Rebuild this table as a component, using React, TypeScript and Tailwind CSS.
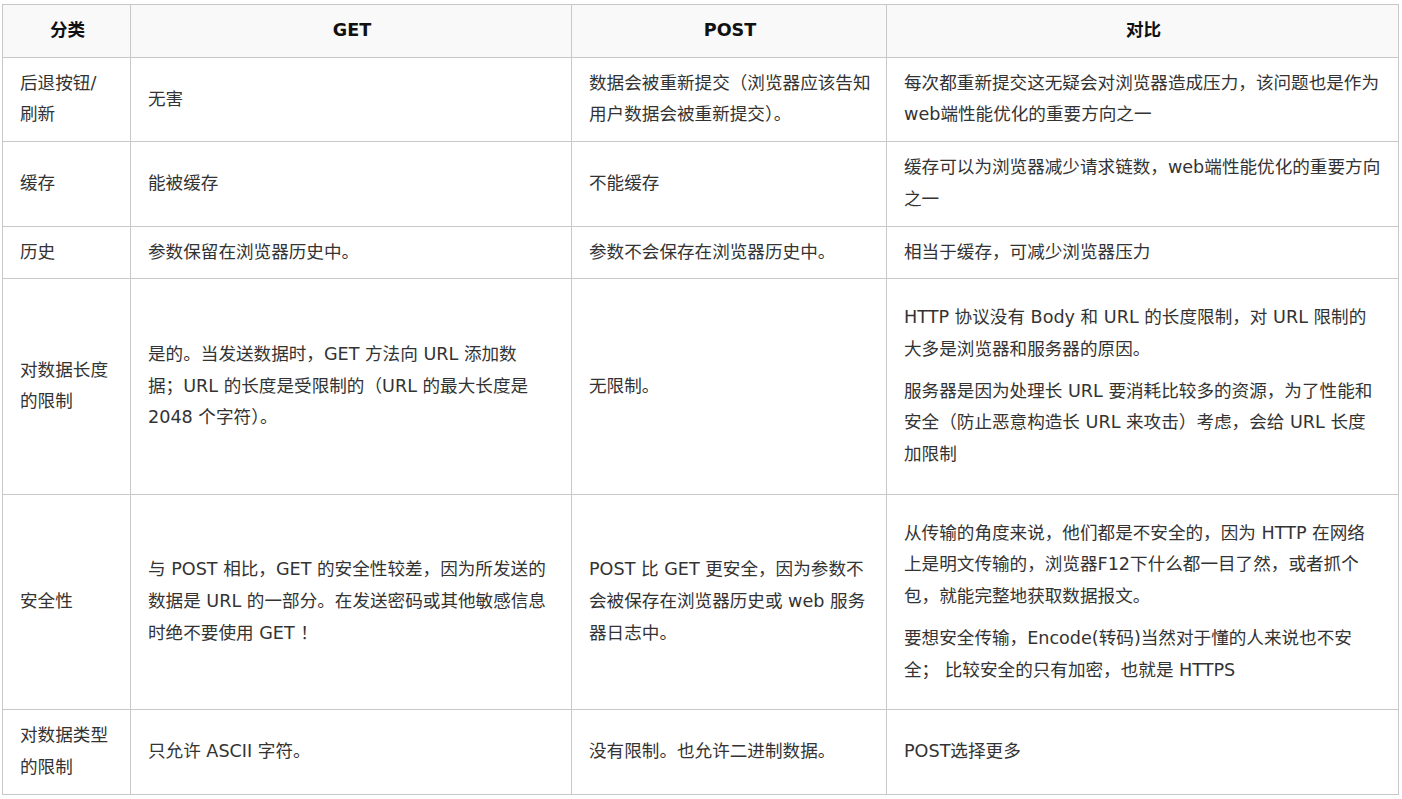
const ROWS: { kind: string; get: string; post: string; compare: string[] }[] = [
  {
    kind: "后退按钮/\n刷新",
    get: "无害",
    post: "数据会被重新提交（浏览器应该告知\n用户数据会被重新提交）。",
    compare: ["每次都重新提交这无疑会对浏览器造成压力，该问题也是作为\nweb端性能优化的重要方向之一"],
  },
  {
    kind: "缓存",
    get: "能被缓存",
    post: "不能缓存",
    compare: ["缓存可以为浏览器减少请求链数，web端性能优化的重要方向\n之一"],
  },
  {
    kind: "历史",
    get: "参数保留在浏览器历史中。",
    post: "参数不会保存在浏览器历史中。",
    compare: ["相当于缓存，可减少浏览器压力"],
  },
  {
    kind: "对数据长度\n的限制",
    get: "是的。当发送数据时，GET 方法向 URL 添加数\n据；URL 的长度是受限制的（URL 的最大长度是\n2048 个字符）。",
    post: "无限制。",
    compare: [
      "HTTP 协议没有 Body 和 URL 的长度限制，对 URL 限制的\n大多是浏览器和服务器的原因。",
      "服务器是因为处理长 URL 要消耗比较多的资源，为了性能和\n安全（防止恶意构造长 URL 来攻击）考虑，会给 URL 长度\n加限制",
    ],
  },
  {
    kind: "安全性",
    get: "与 POST 相比，GET 的安全性较差，因为所发送的\n数据是 URL 的一部分。在发送密码或其他敏感信息\n时绝不要使用 GET ！",
    post: "POST 比 GET 更安全，因为参数不\n会被保存在浏览器历史或 web 服务\n器日志中。",
    compare: [
      "从传输的角度来说，他们都是不安全的，因为 HTTP 在网络\n上是明文传输的，浏览器F12下什么都一目了然，或者抓个\n包，就能完整地获取数据报文。",
      "要想安全传输，Encode(转码)当然对于懂的人来说也不安\n全； 比较安全的只有加密，也就是 HTTPS",
    ],
  },
  {
    kind: "对数据类型\n的限制",
    get: "只允许 ASCII 字符。",
    post: "没有限制。也允许二进制数据。",
    compare: ["POST选择更多"],
  },
];

const cell = "border border-[#c8c8c8] pl-[17px] pr-[15px] py-[10px] align-middle whitespace-pre";

export default function App() {
  return (
    <div
      className="min-h-screen bg-white pl-[2px] pt-[4px] text-[17.6px] leading-[31.7px] text-[#333]"
      style={{ fontFamily: '"DejaVu Sans", "Noto Sans CJK SC", sans-serif' }}
    >
      <table className="w-[1396px] table-fixed border-collapse">
        <colgroup>
          <col className="w-[128px]" />
          <col className="w-[441px]" />
          <col className="w-[315px]" />
          <col className="w-[512px]" />
        </colgroup>
        <thead>
          <tr className="bg-[#f9f9f9]">
            {["分类", "GET", "POST", "对比"].map((h) => (
              <th key={h} className={`${cell} text-center font-bold text-[#111]`}>
                {h}
              </th>
            ))}
          </tr>
        </thead>
        <tbody>
          {ROWS.map((row) => (
            <tr key={row.kind}>
              <td className={cell}>{row.kind}</td>
              <td className={cell}>{row.get}</td>
              <td className={cell}>{row.post}</td>
              <td className={cell}>
                {row.compare.length > 1 ? (
                  <div className="flex flex-col gap-[10px] py-[13px]">
                    {row.compare.map((p) => (
                      <p key={p}>{p}</p>
                    ))}
                  </div>
                ) : (
                  row.compare[0]
                )}
              </td>
            </tr>
          ))}
        </tbody>
      </table>
    </div>
  );
}
